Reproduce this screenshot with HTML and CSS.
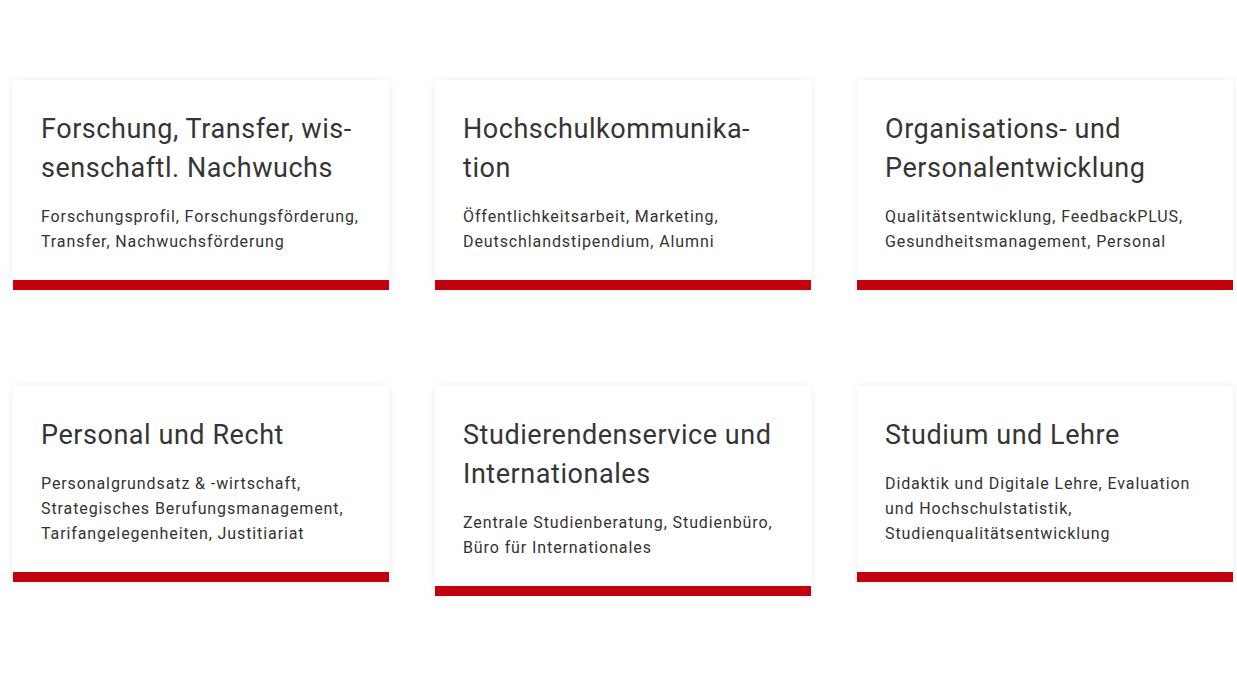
FILE: index.html
```html
<!DOCTYPE html>
<html lang="de">
<head>
    <meta charset="UTF-8">
    <meta name="viewport" content="width=device-width, initial-scale=1.0">
    <title>Bereiche</title>
    <link rel="stylesheet" href="styles.css">
</head>
<body>
    <div class="tiles">
        <!-- erste Reihe -->
        <a class="tile" href="#">
            <div class="tile-body">
                <h2>Forschung, Transfer, wis-<br>senschaftl. Nachwuchs</h2>
                <p>Forschungsprofil, Forschungsförderung, Transfer, Nachwuchsförderung</p>
            </div>
        </a>
        <a class="tile" href="#">
            <div class="tile-body">
                <h2>Hochschulkommunika-<br>tion</h2>
                <p>Öffentlichkeitsarbeit, Marketing, Deutschlandstipendium, Alumni</p>
            </div>
        </a>
        <a class="tile" href="#">
            <div class="tile-body">
                <h2>Organisations- und Personalentwicklung</h2>
                <p>Qualitätsentwicklung, FeedbackPLUS, Gesundheitsmanagement, Personal</p>
            </div>
        </a>

        <!-- zweite Reihe -->
        <a class="tile" href="#">
            <div class="tile-body">
                <h2>Personal und Recht</h2>
                <p>Personalgrundsatz &amp; -wirtschaft, Strategisches Berufungsmanagement, Tarifangelegenheiten, Justitiariat</p>
            </div>
        </a>
        <a class="tile" href="#">
            <div class="tile-body">
                <h2>Studierendenservice und Internationales</h2>
                <p>Zentrale Studienberatung, Studienbüro, Büro für Internationales</p>
            </div>
        </a>
        <a class="tile" href="#">
            <div class="tile-body">
                <h2>Studium und Lehre</h2>
                <p>Didaktik und Digitale Lehre, Evaluation und Hochschulstatistik, Studienqualitätsentwicklung</p>
            </div>
        </a>
    </div>
</body>
</html>
```

FILE: styles.css
```css
body {
    margin: 0;
    padding: 80px 4px 0 13px;
    background: #fff;
    font-family: Roboto, "Liberation Sans", sans-serif;
    color: #333;
}
.tiles {
    display: grid;
    grid-template-columns: repeat(3, 376px);
    column-gap: 46px;
    row-gap: 96px;
    align-items: start;
}
.tile {
    display: block;
    background: #fff;
    color: #333;
    text-decoration: none;
    border-bottom: 10px solid #c3000d;
    box-shadow: 0 0 8px rgba(0,0,0,0.07);
}
.tile-body {
    padding: 30px 28px 26px 28px;
}
.tile h2 {
    margin: 0 0 16px;
    font-size: 27px;
    line-height: 39px;
    font-weight: 400;
    letter-spacing: 0.55px;
    color: #353535;
}
.tile p {
    margin: 0;
    font-size: 16px;
    line-height: 25px;
    letter-spacing: 0.9px;
    color: #333;
}
```
